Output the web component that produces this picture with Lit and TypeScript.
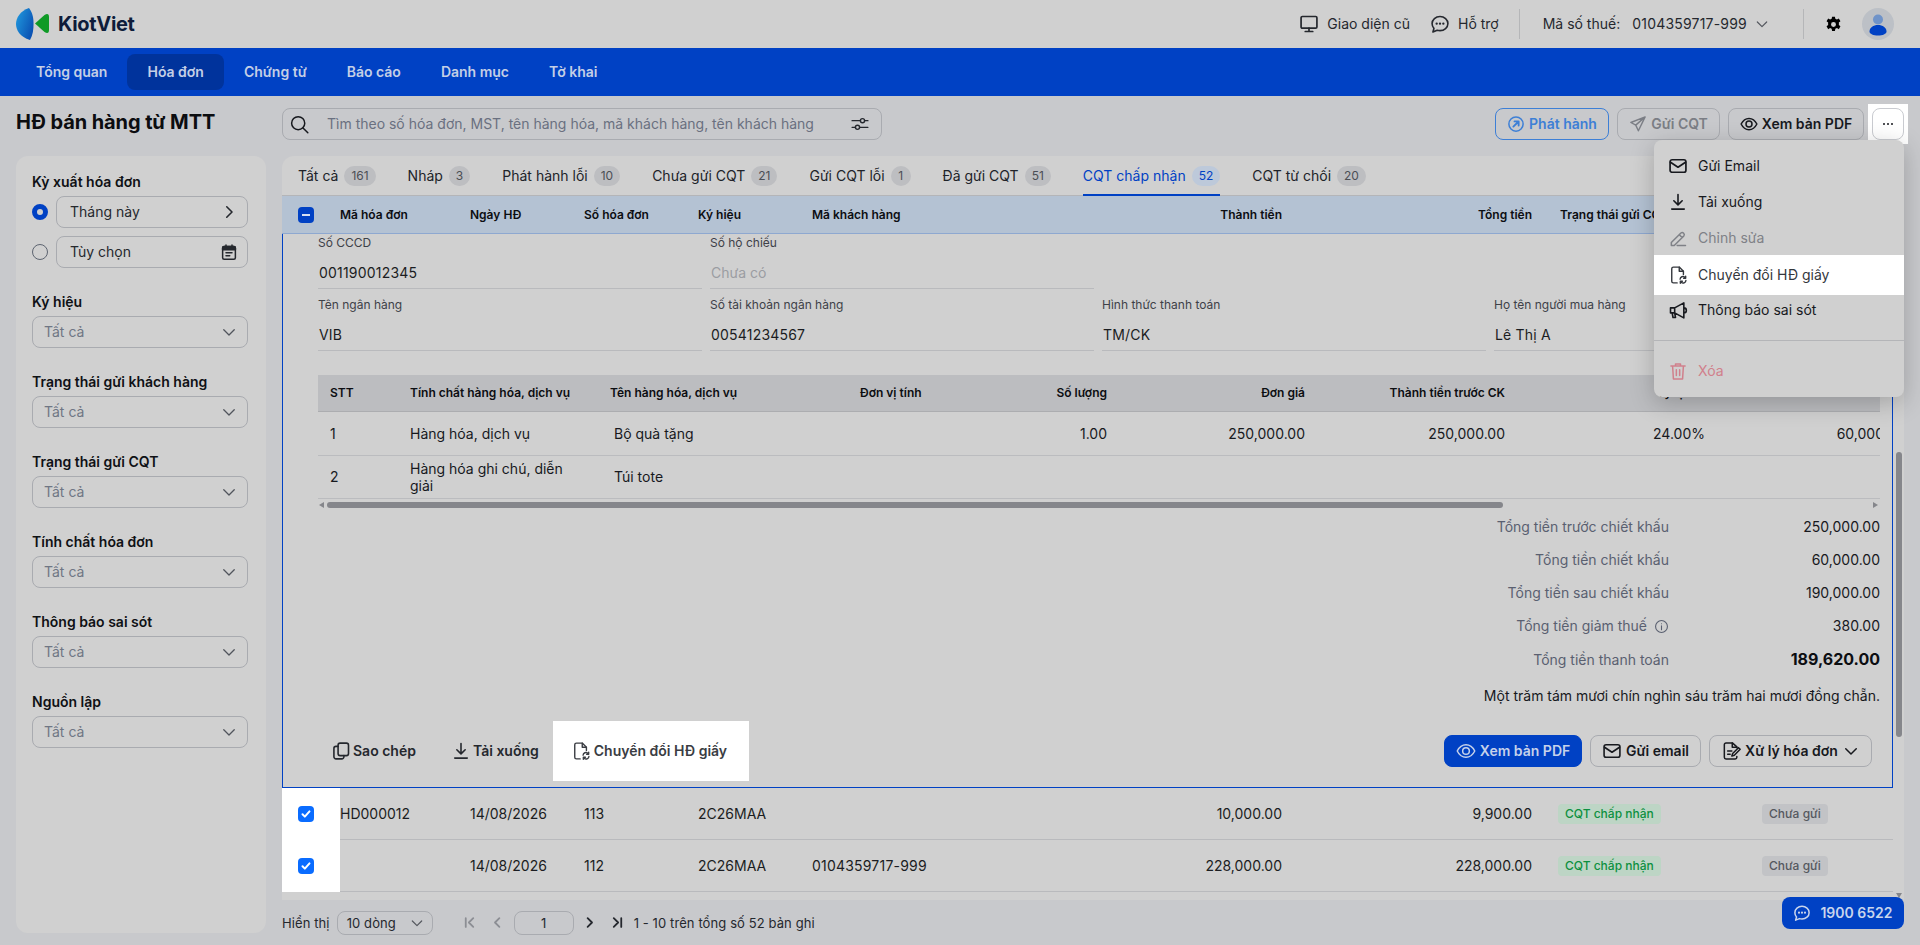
import { LitElement, html, css, svg } from 'lit';
import { customElement } from 'lit/decorators.js';

const ic = (body: unknown, size = 20, sw = 1.5) => html`<svg class="ic" width=${size} height=${size} viewBox="0 0 24 24" fill="none" stroke="currentColor" stroke-width=${sw * 24 / size} stroke-linecap="round" stroke-linejoin="round">${body}</svg>`;

const chevDown = svg`<path d="M5 9l7 7 7-7"/>`;
const chevRight = svg`<path d="M9 5l7 7-7 7"/>`;
const chevLeft = svg`<path d="M15 5l-7 7 7 7"/>`;
const mail = svg`<rect x="2.5" y="4.5" width="19" height="15" rx="2.5"/><path d="M3 7.5l9 6 9-6"/>`;
const download = svg`<path d="M12 3v12M7 10.5l5 5 5-5M4.5 20.5h15"/>`;
const pen = svg`<path d="M4 17.5L15.5 6a2.5 2.5 0 0 1 3.5 3.5L7.5 21H4zM13.5 8l3.5 3.5M11 21h10"/>`;
const fileConv = svg`<path d="M11 21.5H6.5a2 2 0 0 1-2-2v-15a2 2 0 0 1 2-2h7l5 5v4"/><path d="M13.5 2.5v5h5"/><path d="M14.5 17a3.3 3.3 0 0 1 5.6-2.2l1 1M21.5 18.5a3.3 3.3 0 0 1-5.6 2.2l-1-1M21.2 13.5v2.5h-2.5M14.8 22v-2.5h2.5"/>`;
const megaphone = svg`<path d="M3 9.5h5v6H3zM8 9.5l11-6v18l-11-6M19 9.5a3 3 0 0 1 0 6M5 15.5l1 5.5h3l-1-5.5"/>`;
const trash = svg`<path d="M3.5 6h17M9 6V3.5h6V6M5.5 6l1 15.5h11l1-15.5M10 10.5v7M14 10.5v7"/>`;
const eyeWide = svg`<path d="M1.5 12C4 7 8 4.5 12 4.5S20 7 22.5 12C20 17 16 19.5 12 19.5S4 17 1.5 12z"/><circle cx="12" cy="12" r="4"/>`;
const send = svg`<path d="M21.5 2.5L2.5 10l6.5 3.5L12.5 21zM9 13.5L21.5 2.5"/>`;
const copy = svg`<rect x="8.5" y="2.5" width="12.5" height="15" rx="2.5"/><path d="M8.5 6.5H6a2.5 2.5 0 0 0-2.5 2.5v10A2.5 2.5 0 0 0 6 21.5h7a2.5 2.5 0 0 0 2.5-2.5v-1.5"/>`;
const fileEdit = svg`<path d="M19 8v-1l-5-4.5H6a2 2 0 0 0-2 2v15a2 2 0 0 0 2 2h11a2 2 0 0 0 2-2v-1"/><path d="M13.5 2.5v5H19M8 12h5M8 16h3M13 18l1-3 7-7 2 2-7 7z"/>`;
const chat = svg`<path d="M12 3c5.2 0 9.5 3.7 9.5 8.5S17.2 20 12 20c-1.2 0-2.3-.2-3.4-.5L3.5 21.5l1.2-4.2C3.3 15.8 2.5 13.7 2.5 11.500 2.500 6.700 6.800 3 12 3z"/><path d="M8 11.500h.01M12 11.500h.01M16 11.500h.01" stroke-width="2.800"/>`;
const monitor = svg`<rect x="2.5" y="3" width="19" height="14" rx="1.5"/><path d="M12 17v4M7.5 21h9"/>`;
const search = svg`<circle cx="10.5" cy="10.5" r="7.5"/><path d="M16 16l5.5 5.5"/>`;
const sliders = svg`<path d="M2.5 8h10M17.5 8h4M2.5 16h4M11.5 16h10"/><circle cx="15" cy="8" r="2.5"/><circle cx="9" cy="16" r="2.5"/>`;
const calendar = svg`<rect x="3.5" y="4.5" width="17" height="17" rx="2"/><path d="M3.5 6.5a2 2 0 0 1 2-2h13a2 2 0 0 1 2 2v2.5h-17z" fill="currentColor"/><path d="M8 2.5v3M16 2.5v3M8 13h8M8 17h5"/>`;
const info = svg`<circle cx="12" cy="12" r="9.5"/><path d="M12 11v6M12 7.5h.01"/>`;
const firstPage = svg`<path d="M6 5v14M18 5l-7 7 7 7"/>`;
const lastPage = svg`<path d="M18 5v14M6 5l7 7-7 7"/>`;
const publish = svg`<circle cx="12" cy="12" r="9.5"/><path d="M8.5 15.5L15 9M10 8.5h5.5V14" stroke-width="2.5"/>`;

interface Field { label: string; value?: string; empty?: boolean }

@customElement('app-root')
export class AppRoot extends LitElement {
  static styles = css`
    :host { display: block; width: 1920px; height: 945px; overflow: hidden; background: #c8c9cc; color: #17191e; font: 14px/20px Inter, "Noto Sans", sans-serif; position: relative; }
    .ic { flex: none; display: block; }
    .wide { letter-spacing: 0.2px; }

    .top { height: 48px; background: #d0d0d0; display: flex; align-items: center; padding: 0 26px 0 16px; }
    .logo { display: flex; align-items: center; gap: 9px; }
    .logo b { font-size: 20px; font-weight: 700; color: #0e1c3a; letter-spacing: -0.3px; }
    .top-right { margin-left: auto; display: flex; align-items: center; }
    .top-link { display: flex; align-items: center; gap: 8px; color: #25282e; margin-right: 20px; }
    .vline { width: 1px; height: 30px; background: #b5b6b8; }
    .tax { display: flex; align-items: center; margin: 0 33px 0 23px; color: #25282e; }
    .tax span + span { margin-left: 12px; }
    .tax .ic { margin-left: 7px; color: #55585f; }
    .gear { margin: 0 20px 0 21px; color: #000; }
    .avatar { width: 32px; height: 32px; border-radius: 50%; background: #bcc0c6; }

    nav { height: 48px; background: #0041c4; display: flex; align-items: center; padding: 0 16px; }
    nav a { height: 36px; padding: 0 20px; display: flex; align-items: center; border-radius: 8px; color: #c4cfe6; font-weight: 600; }
    nav a.on { background: #00339c; }

    .body { display: grid; grid-template-columns: 250px 1622px; grid-template-rows: 32px 777px; gap: 16px; padding: 12px 16px 0; }
    h1 { margin: 0; font-size: 20px; line-height: 28px; font-weight: 700; color: #0c0d10; letter-spacing: -0.1px; }

    .toolbar { display: flex; align-items: center; gap: 8px; position: relative; }
    .search { width: 600px; height: 32px; box-sizing: border-box; border: 1px solid #a9abb0; border-radius: 8px; display: flex; align-items: center; padding: 0 11px 0 6px; color: #6a7080; margin-right: auto; }
    .search .ic:first-child { color: #16181d; margin-right: 17px; }
    .search span { flex: 1; }
    .search .ic:last-child { color: #25282e; }
    .btn { height: 32px; box-sizing: border-box; border: 1px solid #a9abb0; border-radius: 8px; display: flex; align-items: center; justify-content: center; gap: 4px; font-weight: 600; padding: 0 10px; white-space: nowrap; }
    .btn.outline { border-color: #3d7fd6; color: #3d7fd6; width: 114px; }
    .btn.muted { color: #7b7e85; width: 103px; }
    .btn.pdf { width: 136px; }
    .more-wrap { padding: 4px; margin: -4px; background: #fff; }
    .more { width: 32px; height: 32px; box-sizing: border-box; border: 1px solid #c9cbd0; border-radius: 8px; background: #fff; display: flex; align-items: center; justify-content: center; gap: 2px; }
    .more i { width: 2px; height: 2px; border-radius: 50%; background: #17191e; }

    .menu { position: absolute; right: 0; top: 32px; width: 250px; box-sizing: border-box; padding: 8px 0; background: #d0d0d0; border-radius: 8px; box-shadow: 0 6px 24px rgba(0,0,0,.22); z-index: 5; }
    .mi { height: 36px; display: flex; align-items: center; gap: 10px; padding: 0 14px; }
    .mi.off { color: #7f8187; }
    .mi.hi { height: 40px; margin: -1px 0 -3px; background: #fff; color: #34373d; position: relative; }
    .mi.del { color: #d0808c; }
    .menu hr { margin: 12px 0; border: 0; border-top: 1px solid #b4b5b8; }

    .side { background: #d0d0d0; border-radius: 12px; padding: 16px 18px 16px 16px; height: 777px; box-sizing: border-box; }
    .side label { display: block; font-weight: 600; height: 20px; margin-top: 24px; margin-bottom: 4px; color: #0f1115; }
    .side label:first-child { margin-top: 0; }
    .radio-row { display: flex; align-items: center; gap: 8px; margin-bottom: 8px; }
    .radio-row:last-of-type { margin-bottom: 0; }
    .radio { width: 16px; height: 16px; box-sizing: border-box; border-radius: 50%; border: 1.5px solid #5d6470; flex: none; }
    .radio.on { border: 5px solid #0041c4; background: #d0d0d0; }
    .input { height: 32px; box-sizing: border-box; border: 1px solid #a9abb0; border-radius: 8px; display: flex; align-items: center; justify-content: space-between; padding: 0 9px 0 11px; flex: 1; }
    .input.first { padding-left: 13px; color: #25282e; }
    .input.sel { color: #6f7684; }
    .input.sel .ic { color: #50545c; }

    .main { display: flex; flex-direction: column; min-width: 0; }
    .panel { height: 744px; flex: none; background: #d0d0d0; border-radius: 12px 12px 0 0; overflow: hidden; display: flex; flex-direction: column; }
    .tabs { height: 40px; box-sizing: border-box; border-bottom: 1px solid #b4b5b8; display: flex; padding-left: 16px; gap: 32px; flex: none; }
    .tab { display: flex; align-items: center; gap: 6px; color: #202329; position: relative; height: 39px; white-space: nowrap; }
    .tab em { font-style: normal; font-size: 12px; min-width: 6px; padding: 0 7px; height: 20px; line-height: 20px; text-align: center; border-radius: 10px; background: #bdbec1; color: #4b4e55; }
    .tab.on { color: #0041c4; }
    .tab.on em { background: #bdc9da; color: #0041c4; }
    .tab.on::after { content: ''; position: absolute; left: 0; right: 0; bottom: -1px; height: 2px; background: #0041c4; }

    .cols { display: grid; grid-template-columns: 58px 130px 114px 114px 114px 200px 282px 250px 218px 142px; align-items: center; }
    .cols > .r { text-align: right; padding-right: 12px; }
    .thead { height: 38px; box-sizing: border-box; flex: none; background: #b4c2d3; border-bottom: 1px solid #8ea8d0; font-size: 12px; font-weight: 600; color: #0c0e12; white-space: nowrap; }
    .thead .st { padding-left: 16px; }
    .box { width: 16px; height: 16px; border-radius: 4px; background: #0041c4; margin-left: 16px; display: flex; align-items: center; justify-content: center; }
    .box i { width: 8px; height: 2px; background: #d6e0f2; }

    .scroller { flex: 1; display: flex; min-height: 0; }
    .content { width: 1611px; flex: none; }
    .track { flex: 1; position: relative; }
    .thumb { width: 6px; height: 285px; margin: 218px 0 0 3px; background: #85868b; border-radius: 3px; }
    .tri { width: 0; margin: 156px 0 0 3px; border: 3px solid transparent; border-top: 5px solid #85868b; border-bottom: 0; }

    .detail { height: 554px; box-sizing: border-box; border: 1px solid #0041c4; border-top: 0; padding-left: 35px; }
    .fields { display: grid; grid-template-columns: repeat(4, 384px); column-gap: 8px; row-gap: 7px; }
    .f { height: 55px; box-sizing: border-box; border-bottom: 1px solid #b9babd; }
    .f.blank { border: 0; }
    .f small { display: block; font-size: 12px; line-height: 18px; color: #3e4148; }
    .f div { height: 30px; line-height: 30px; margin-top: 6px; padding-left: 1px; color: #1b1d22; }
    .f div.none { color: #9b9da2; }

    .inner { width: 1562px; margin-top: 24px; overflow: hidden; }
    .irow { display: grid; grid-template-columns: 80px 200px 250px 132px 139px 198px 200px 200px 200px; white-space: nowrap; }
    .irow > div { padding-left: 12px; }
    .irow > .r { text-align: right; padding: 0 12px 0 0; }
    .ihead { height: 37px; box-sizing: border-box; align-items: center; background: #bcbdc0; border-bottom: 1px solid #acadb0; font-size: 12px; font-weight: 600; color: #0c0e12; }
    .ibody { height: 44px; box-sizing: border-box; align-items: center; border-bottom: 1px solid #bbbcbf; }
    .ibody.tall2 { height: 43px; }
    .ibody .wrap { white-space: normal; padding-right: 20px; line-height: 17px; }
    .ibody .name { padding-left: 16px; }
    .hscroll { height: 12px; display: flex; align-items: center; gap: 3px; color: #85868b; }
    .hbar { width: 1176px; height: 6px; border-radius: 3px; background: #85868b; }
    .tl, .trr { width: 0; border: 3px solid transparent; }
    .tl { border-right: 5px solid #85868b; border-left: 0; margin-left: 1px; }
    .trr { border-left: 5px solid #85868b; border-right: 0; margin-left: auto; margin-right: 2px; }

    .sum { width: 1562px; margin-top: 5px; display: grid; grid-template-columns: 1351px 211px; row-gap: 11px; line-height: 22px; text-align: right; }
    .sum .l { color: #5a6070; display: flex; justify-content: flex-end; align-items: center; gap: 7px; }
    .sum strong { font-size: 16px; font-weight: 700; color: #0c0e12; }
    .words { width: 1562px; text-align: right; line-height: 22px; margin-top: 14px; color: #17191e; }

    .actions { width: 1554px; height: 60px; margin-top: 14px; display: flex; align-items: center; }
    .ghost { height: 60px; display: flex; align-items: center; gap: 2px; font-weight: 600; padding: 0 14px 0 13px; color: #25282e; white-space: nowrap; }
    .ghost.first { margin-right: 8px; }
    .ghost.hi { background: #fff; padding: 0 22px 0 18px; gap: 3px; color: #3a3d43; }
    .actions .sp { flex: 1; }
    .actions .btn + .btn { margin-left: 8px; }
    .btn.primary { background: #0041c4; border-color: #0041c4; color: #c6d2ea; width: 138px; }
    .btn.mail { width: 111px; }
    .btn.proc { width: 163px; }

    .row { height: 52px; border-bottom: 1px solid #b9babd; box-sizing: border-box; color: #1b1d22; white-space: nowrap; }
    .row .chk { background: #fff; height: 52px; display: flex; align-items: center; margin-bottom: -1px; }
    .row .chk span { width: 16px; height: 16px; margin-left: 16px; border-radius: 4px; background: #0a6cff; color: #fff; display: flex; align-items: center; justify-content: center; }
    .tag { display: inline-block; height: 20px; line-height: 20px; font-size: 12px; font-weight: 500; padding: 0 7px; border-radius: 4px; }
    .tag.ok { background: #bdd5c5; color: #0d9040; }
    .tag.wait { background: #c2c3c6; color: #55585f; }
    .row .stc { padding-left: 14px; }

    .pager { height: 45px; flex: none; display: flex; align-items: center; color: #25282e; font-size: 13px; letter-spacing: 0.1px; }
    .pg-sel { width: 96px; height: 24px; box-sizing: border-box; margin: 0 23px 0 7px; border: 1px solid #a9abb0; border-radius: 8px; display: flex; align-items: center; justify-content: space-between; padding: 0 7px 0 9px; }
    .pg-sel .ic { color: #55585f; }
    .pg-ic { width: 28px; display: flex; justify-content: center; color: #8c8e94; }
    .pg-ic.on { color: #25282e; }
    .pg-input { width: 60px; height: 24px; box-sizing: border-box; border: 1px solid #a9abb0; border-radius: 8px; display: flex; align-items: center; justify-content: center; margin: 0 2px 0 2px; }
    .pg-sum { margin-left: 2px; }

    .phone { position: absolute; right: 16px; top: 897px; width: 122px; height: 32px; border-radius: 8px; background: #0041c4; color: #c9d5ec; font-weight: 600; display: flex; align-items: center; justify-content: center; gap: 9px; z-index: 3; }
  `;

  private detailFields(): Field[] {
    return [
      { label: 'Số CCCD', value: '001190012345' },
      { label: 'Số hộ chiếu', value: 'Chưa có', empty: true },
      { label: '' },
      { label: '' },
      { label: 'Tên ngân hàng', value: 'VIB' },
      { label: 'Số tài khoản ngân hàng', value: '00541234567' },
      { label: 'Hình thức thanh toán', value: 'TM/CK' },
      { label: 'Họ tên người mua hàng', value: 'Lê Thị A' },
    ];
  }

  private renderRow(code: string, no: string, buyer: string, sub: string, total: string) {
    return html`<div class="cols row">
      <div class="chk"><span>${ic(svg`<path d="M6 12.5l4 4 8-9"/>`, 14, 2)}</span></div>
      <div>${code}</div><div>14/08/2026</div><div>${no}</div><div>2C26MAA</div><div class="wide">${buyer}</div>
      <div class="r">${sub}</div><div class="r">${total}</div>
      <div class="stc"><span class="tag ok">CQT chấp nhận</span></div>
      <div><span class="tag wait">Chưa gửi</span></div>
    </div>`;
  }

  render() {
    const filters = ['Ký hiệu', 'Trạng thái gửi khách hàng', 'Trạng thái gửi CQT', 'Tính chất hóa đơn', 'Thông báo sai sót', 'Nguồn lập'];
    const tabs: [string, string][] = [['Tất cả', '161'], ['Nháp', '3'], ['Phát hành lỗi', '10'], ['Chưa gửi CQT', '21'], ['Gửi CQT lỗi', '1'], ['Đã gửi CQT', '51'], ['CQT chấp nhận', '52'], ['CQT từ chối', '20']];
    return html`
      <div class="top">
        <div class="logo">
          <svg width="33" height="32" viewBox="0 0 33 32">
            <defs><linearGradient id="lg" x1="0" x2="1" y1="0.2" y2="0.8"><stop offset="0" stop-color="#1f96dc"/><stop offset="1" stop-color="#0a4db0"/></linearGradient></defs>
            <path d="M13 0C4 3 0 10 0 16s4 13 14 16c3-5 3.5-11 3.5-16S17 5 13 0z" fill="url(#lg)"/>
            <path d="M19 15.5L28.5 7Q33 4.5 33 9v13q0 4.5-4.5 2z" fill="#0f9a26"/>
          </svg>
          <b>KiotViet</b>
        </div>
        <div class="top-right">
          <div class="top-link">${ic(monitor, 20, 1.7)}<span>Giao diện cũ</span></div>
          <div class="top-link">${ic(chat, 20, 1.6)}<span>Hỗ trợ</span></div>
          <div class="vline"></div>
          <div class="tax"><span>Mã số thuế:</span><span class="wide">0104359717-999</span>${ic(chevDown, 16, 1.2)}</div>
          <div class="vline"></div>
          <svg class="gear" width="17" height="17" viewBox="0 0 24 24"><path fill="#000" fill-rule="evenodd" d="M14 1l.6 3 2.3 1 2.6-1.6 2.3 4-2.3 1.9a9 9 0 0 1 0 3.4l2.3 1.9-2.3 4-2.6-1.6-2.3 1-.6 3h-4l-.6-3-2.3-1-2.6 1.6-2.3-4 2.3-1.9a9 9 0 0 1 0-3.4L2.2 7.4l2.3-4L7.1 5l2.3-1L10 1zM12 8.5a3.5 3.5 0 1 0 0 7 3.5 3.5 0 0 0 0-7z"/></svg>
          <svg class="avatar" viewBox="0 0 32 32"><circle cx="16" cy="11.5" r="5" fill="#6f93c9"/><path d="M7.5 23.5c0-4 4-6.5 8.5-6.5s8.5 2.5 8.5 6.5c0 2.5-4 4-8.5 4s-8.5-1.5-8.5-4z" fill="#0041c4"/></svg>
        </div>
      </div>

      <nav>
        <a>Tổng quan</a><a class="on">Hóa đơn</a><a>Chứng từ</a><a>Báo cáo</a><a>Danh mục</a><a>Tờ khai</a>
      </nav>

      <div class="body">
        <h1>HĐ bán hàng từ MTT</h1>
        <div class="toolbar">
          <div class="search">${ic(search, 21, 1.5)}<span>Tìm theo số hóa đơn, MST, tên hàng hóa, mã khách hàng, tên khách hàng</span>${ic(sliders, 20, 1.4)}</div>
          <div class="btn outline">${ic(publish, 18, 1.5)}Phát hành</div>
          <div class="btn muted">${ic(send, 18, 1.4)}Gửi CQT</div>
          <div class="btn pdf">${ic(eyeWide, 18, 1.5)}Xem bản PDF</div>
          <div class="more-wrap"><div class="more"><i></i><i></i><i></i></div></div>
          <div class="menu">
            <div class="mi">${ic(mail, 20, 1.7)}Gửi Email</div>
            <div class="mi">${ic(download, 20, 1.6)}Tải xuống</div>
            <div class="mi off">${ic(pen, 20, 1.5)}Chỉnh sửa</div>
            <div class="mi hi">${ic(fileConv, 20, 1.4)}Chuyển đổi HĐ giấy</div>
            <div class="mi">${ic(megaphone, 20, 1.6)}Thông báo sai sót</div>
            <hr />
            <div class="mi del">${ic(trash, 20, 1.5)}Xóa</div>
          </div>
        </div>

        <aside class="side">
          <label>Kỳ xuất hóa đơn</label>
          <div class="radio-row"><div class="radio on"></div><div class="input first"><span>Tháng này</span>${ic(chevRight, 18, 1.6)}</div></div>
          <div class="radio-row"><div class="radio"></div><div class="input first"><span>Tùy chọn</span>${ic(calendar, 18, 1.5)}</div></div>
          ${filters.map((f) => html`<label>${f}</label><div class="input sel"><span>Tất cả</span>${ic(chevDown, 18, 1.3)}</div>`)}
        </aside>

        <div class="main">
          <div class="panel">
            <div class="tabs">
              ${tabs.map(([t, n]) => html`<div class="tab ${t === 'CQT chấp nhận' ? 'on' : ''}">${t}<em>${n}</em></div>`)}
            </div>
            <div class="cols thead">
              <div class="box"><i></i></div>
              <div>Mã hóa đơn</div><div>Ngày HĐ</div><div>Số hóa đơn</div><div>Ký hiệu</div><div>Mã khách hàng</div>
              <div class="r">Thành tiền</div><div class="r">Tổng tiền</div>
              <div class="st">Trạng thái gửi CQT</div><div></div>
            </div>
            <div class="scroller">
              <div class="content">
                <div class="detail">
                  <div class="fields">
                    ${this.detailFields().map((f) => f.label
                      ? html`<div class="f"><small>${f.label}</small><div class=${f.empty ? 'none' : 'wide'}>${f.value}</div></div>`
                      : html`<div class="f blank"></div>`)}
                  </div>
                  <div class="inner">
                    <div class="irow ihead">
                      <div>STT</div><div>Tính chất hàng hóa, dịch vụ</div><div>Tên hàng hóa, dịch vụ</div><div>Đơn vị tính</div>
                      <div class="r">Số lượng</div><div class="r">Đơn giá</div><div class="r">Thành tiền trước CK</div><div class="r">Tỷ lệ CK</div><div class="r">Tiền CK</div>
                    </div>
                    <div class="irow ibody">
                      <div>1</div><div>Hàng hóa, dịch vụ</div><div class="name">Bộ quà tặng</div><div></div>
                      <div class="r">1.00</div><div class="r">250,000.00</div><div class="r">250,000.00</div><div class="r">24.00%</div><div class="r">60,000.00</div>
                    </div>
                    <div class="irow ibody tall2">
                      <div>2</div><div class="wrap">Hàng hóa ghi chú, diễn giải</div><div class="name">Túi tote</div><div></div>
                      <div></div><div></div><div></div><div></div><div></div>
                    </div>
                    <div class="hscroll"><span class="tl"></span><div class="hbar"></div><span class="trr"></span></div>
                  </div>
                  <div class="sum">
                    <div class="l">Tổng tiền trước chiết khấu</div><div>250,000.00</div>
                    <div class="l">Tổng tiền chiết khấu</div><div>60,000.00</div>
                    <div class="l">Tổng tiền sau chiết khấu</div><div>190,000.00</div>
                    <div class="l">Tổng tiền giảm thuế ${ic(info, 15, 1.1)}</div><div>380.00</div>
                    <div class="l">Tổng tiền thanh toán</div><div><strong>189,620.00</strong></div>
                  </div>
                  <div class="words">Một trăm tám mươi chín nghìn sáu trăm hai mươi đồng chẵn.</div>
                  <div class="actions">
                    <div class="ghost first">${ic(copy, 20, 1.6)}Sao chép</div>
                    <div class="ghost">${ic(download, 20, 1.6)}Tải xuống</div>
                    <div class="ghost hi">${ic(fileConv, 20, 1.4)}Chuyển đổi HĐ giấy</div>
                    <div class="sp"></div>
                    <div class="btn primary">${ic(eyeWide, 20, 1.5)}Xem bản PDF</div>
                    <div class="btn mail">${ic(mail, 20, 1.6)}Gửi email</div>
                    <div class="btn proc">${ic(fileEdit, 20, 1.5)}Xử lý hóa đơn ${ic(chevDown, 18, 1.5)}</div>
                  </div>
                </div>
                ${this.renderRow('HD000012', '113', '', '10,000.00', '9,900.00')}
                ${this.renderRow('', '112', '0104359717-999', '228,000.00', '228,000.00')}
              </div>
              <div class="track"><div class="thumb"></div><div class="tri"></div></div>
            </div>
          </div>
          <div class="pager">
            <span>Hiển thị</span>
            <div class="pg-sel"><span>10 dòng</span>${ic(chevDown, 16, 1.2)}</div>
            <div class="pg-ic">${ic(firstPage, 15, 1.8)}</div>
            <div class="pg-ic">${ic(chevLeft, 15, 1.8)}</div>
            <div class="pg-input">1</div>
            <div class="pg-ic on">${ic(chevRight, 15, 1.8)}</div>
            <div class="pg-ic on">${ic(lastPage, 15, 1.8)}</div>
            <span class="pg-sum">1 - 10 trên tổng số 52 bản ghi</span>
          </div>
        </div>
      </div>

      <div class="phone">${ic(chat, 18, 1.5)}1900 6522</div>
    `;
  }
}
